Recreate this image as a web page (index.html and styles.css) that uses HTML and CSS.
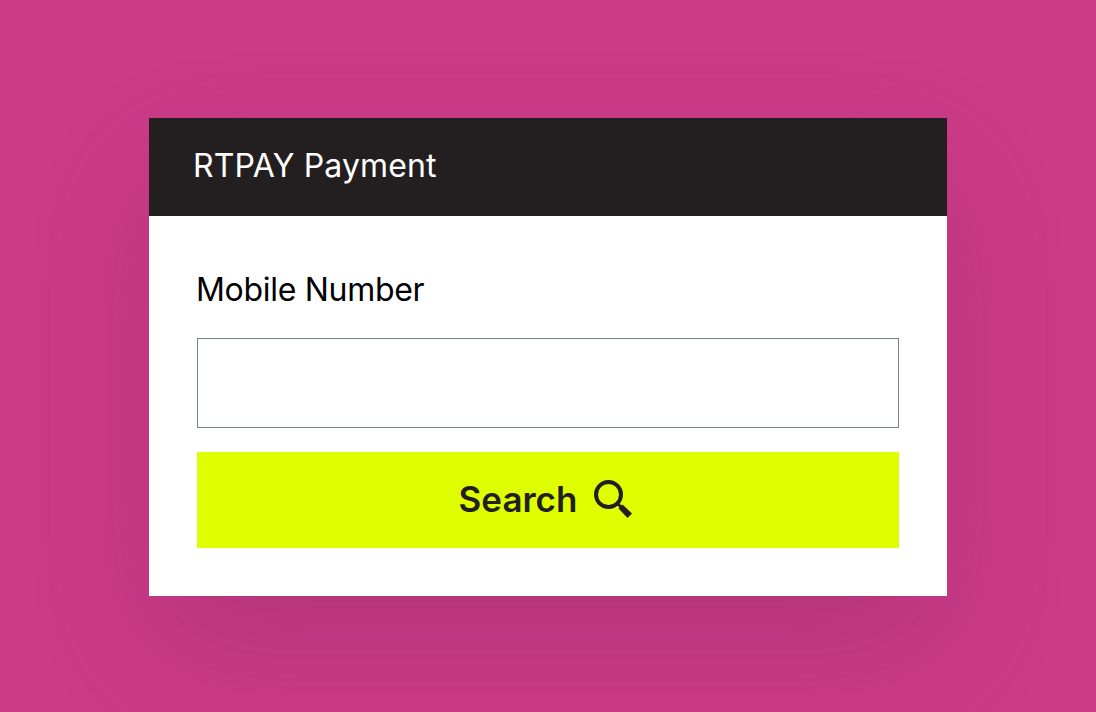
FILE: index.html
```html
<!DOCTYPE html>
<html lang="en">
<head>
<meta charset="utf-8">
<title>RTPAY Payment</title>
<link rel="stylesheet" href="styles.css">
</head>
<body>
<main class="card">
  <header class="card-head">RTPAY Payment</header>
  <form class="card-body">
    <label class="field-label" for="mobile">Mobile Number</label>
    <input class="field-input" id="mobile" type="text">
    <button class="search-btn" type="button">
      <span>Search</span>
      <svg class="search-icon" viewBox="0 0 38 38" width="38" height="38" aria-hidden="true">
        <circle cx="14.5" cy="14.5" r="12.5" fill="none" stroke="#231f20" stroke-width="4"/>
        <path d="M23.5 23.5 L28 28" stroke="#231f20" stroke-width="3" fill="none"/>
        <path d="M24.5 28.5 L28.5 24.5 L38 33.5 L33.5 38 Z" fill="#231f20"/>
      </svg>
    </button>
  </form>
</main>
</body>
</html>
```
FILE: styles.css
```css
* { box-sizing: border-box; }
html, body { height: 100%; }
body {
  margin: 0;
  padding-top: 118px;
  background: #cb3b88;
  overflow: hidden;
  font-family: Inter, "Liberation Sans", sans-serif;
}
.card {
  width: 798px;
  height: 478px;
  margin: 0 auto;
  background: #fff;
  box-shadow: 0 55px 120px -10px rgba(100, 30, 70, 0.24);
}
.card-head {
  height: 98px;
  padding: 0 0 4px 44px;
  display: flex;
  align-items: center;
  background: #231f20;
  color: #fff;
  font-size: 32px;
  letter-spacing: 0.15px;
}
.card-body {
  padding: 48px;
  display: flex;
  flex-direction: column;
}
.field-label {
  height: 74px;
  padding-top: 6px;
  color: #000;
  font-size: 32px;
  line-height: 40px;
  letter-spacing: -0.3px;
  text-indent: -1px;
}
.field-input {
  height: 90px;
  width: 100%;
  border: 1px solid #75858a;
  border-radius: 0;
  background: #fff;
}
.search-btn {
  height: 96px;
  margin-top: 24px;
  border: 0;
  padding: 0 5px 2px 0;
  background: #dfff00;
  color: #231f20;
  display: flex;
  align-items: center;
  justify-content: center;
  gap: 17px;
  font-family: inherit;
  font-size: 35px;
  font-weight: 600;
}
.search-icon { margin-top: 0; }
```
